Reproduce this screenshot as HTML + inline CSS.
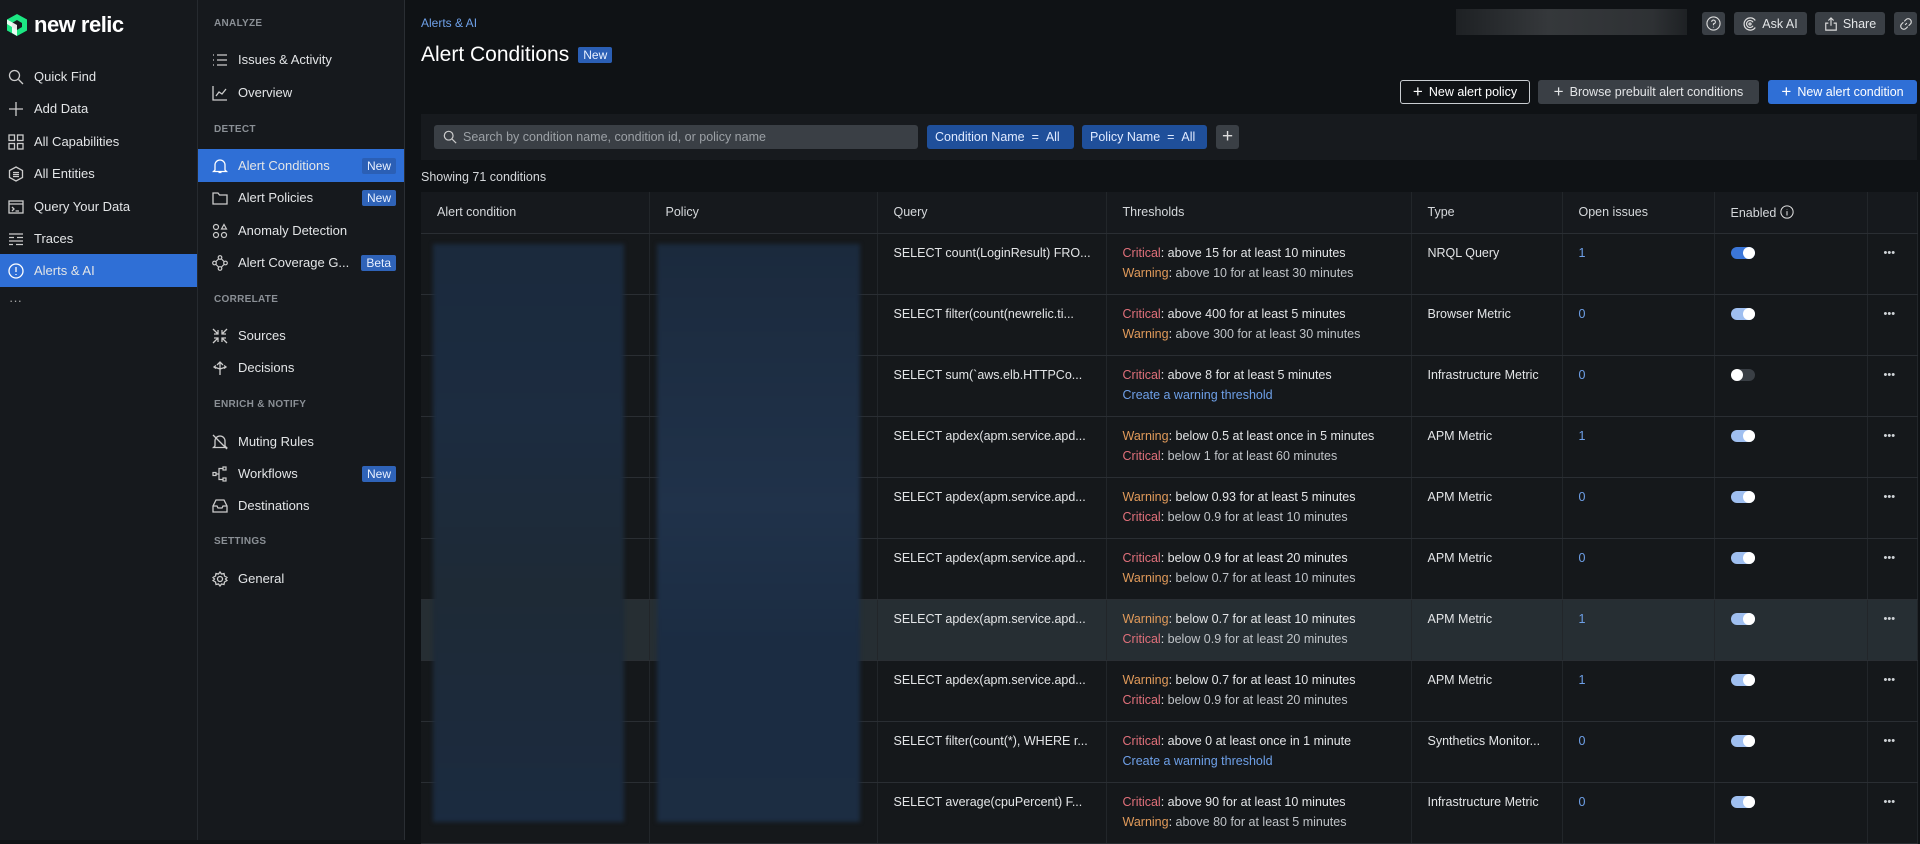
<!DOCTYPE html>
<html><head><meta charset="utf-8"><style>
*{box-sizing:border-box;margin:0;padding:0}
body{width:1920px;height:840px;overflow:hidden;background:#0f1215;font-family:"Liberation Sans",sans-serif;color:#e3e5e7;font-size:13px;position:relative}
.abs{position:absolute}
.nav1{left:0;top:0;width:198px;height:840px;background:#16191d;border-right:1px solid #262a2f}
.nav2{left:198px;top:0;width:207px;height:840px;background:#16191d;border-right:1px solid #2a2e33}
.it{position:absolute;left:0;height:33px;display:flex;align-items:center;font-size:13px;color:#e3e5e7;width:100%}
.it svg{width:16px;height:16px;margin-right:10px;flex:none}
.n1 .it{padding-left:8px}
.n2 .it{padding-left:14px}
.sec{position:absolute;left:16px;font-size:10px;color:#8b9096;letter-spacing:.3px;font-weight:bold}
.act{background:#2f6fd6}
.badge{position:absolute;right:8px;background:#2f63b8;color:#e8f0ff;font-size:12px;padding:1px 5px;border-radius:2px}
.btn{position:absolute;top:12px;height:23px;background:#3a3f45;border-radius:3px;display:flex;align-items:center;justify-content:center;font-size:12.5px;color:#e3e5e7;gap:5px}
.ab{position:absolute;top:80px;height:24px;border-radius:3px;display:flex;align-items:center;justify-content:center;font-size:12.5px;gap:6px}
table{position:absolute;left:421px;top:192px;border-collapse:collapse;table-layout:fixed;width:1496px}
td,th{border-bottom:1px solid #2a2e33;border-right:1px solid #22262a;vertical-align:top;text-align:left;font-weight:normal;padding:0 16px;background:#15181b;white-space:nowrap;overflow:hidden}
th{height:41px;vertical-align:middle;font-size:12.5px;color:#d5d8db;background:#16191d}
td{height:61px;padding-top:9px;font-size:12.5px;line-height:20px;color:#e3e5e7}
.c{color:#e0707a}.w{color:#e09a5a}.lk{color:#6ea0e8}
tr.h td{background:#262e33}
.tg{display:inline-block;width:24px;height:12px;border-radius:6px;background:#3b76d8;position:relative;margin-top:4px}
.tg:after{content:"";position:absolute;right:0;top:0;width:12px;height:12px;border-radius:50%;background:#fff}
.tg.off{background:#3a3f45}.tg.off:after{left:0;right:auto}
.tg.lt{background:#9fbff0}
.dots{color:#cfd3d7;font-size:11px;letter-spacing:0}
</style></head><body>

<div class="abs nav1 n1">
 <div class="abs" style="left:6px;top:12px;display:flex;align-items:center;gap:6px">
  <svg width="22" height="24" viewBox="0 0 22 24"><path d="M11 1L21 6.5V17.5L11 23L1 17.5V6.5Z" fill="#1ce783"/><path d="M11 7L16 10V14L11 17L6 14V10Z" fill="#16191d"/><path d="M1 6.5L11 12V23L6 20V14L1 11Z" fill="#fff" opacity=".9"/></svg>
  <span style="font-size:22px;font-weight:bold;color:#fff;letter-spacing:-.5px">new relic</span>
 </div>
 <div class="it" style="top:60px"><svg viewBox="0 0 16 16" fill="none" stroke="#ccc" stroke-width="1.3"><circle cx="6.5" cy="6.5" r="5"/><path d="M10.5 10.5L15 15"/></svg>Quick Find</div>
 <div class="it" style="top:92px"><svg viewBox="0 0 16 16" stroke="#ccc" stroke-width="1.3"><path d="M8 1V15M1 8H15"/></svg>Add Data</div>
 <div class="it" style="top:125px"><svg viewBox="0 0 16 16" fill="none" stroke="#ccc" stroke-width="1.3"><rect x="1" y="1" width="5.5" height="5.5"/><rect x="9.5" y="1" width="5.5" height="5.5"/><rect x="1" y="9.5" width="5.5" height="5.5"/><rect x="9.5" y="9.5" width="5.5" height="5.5"/></svg>All Capabilities</div>
 <div class="it" style="top:157px"><svg viewBox="0 0 16 16" fill="none" stroke="#ccc" stroke-width="1.3"><path d="M8 1L14.5 4.5V11.5L8 15L1.5 11.5V4.5Z"/><path d="M5 6.5H11M5 8.5H11M5 10.5H11"/></svg>All Entities</div>
 <div class="it" style="top:190px"><svg viewBox="0 0 16 16" fill="none" stroke="#ccc" stroke-width="1.3"><rect x="1" y="2" width="14" height="12"/><path d="M1 5H15M4 8L6 10L4 12M7.5 12H11"/></svg>Query Your Data</div>
 <div class="it" style="top:222px"><svg viewBox="0 0 16 16" stroke="#ccc" stroke-width="1.3"><path d="M1 3H15M1 6.5H6M9 6.5H15M1 10H15M1 13.5H5M8 13.5H15"/></svg>Traces</div>
 <div class="it act" style="top:254px"><svg viewBox="0 0 16 16" fill="none" stroke="#fff" stroke-width="1.3"><circle cx="8" cy="8" r="7"/><path d="M8 4V9M8 11V12"/></svg>Alerts &amp; AI</div>
 <div class="abs" style="left:9px;top:293px;color:#aaa">···</div>
</div>

<div class="abs nav2 n2">
 <div class="sec" style="top:18px">ANALYZE</div>
 <div class="it" style="top:43px"><svg viewBox="0 0 16 16" stroke="#ccc" stroke-width="1.3"><path d="M1 3H2M1 8H2M1 13H2M5 3H15M5 8H15M5 13H15"/></svg>Issues &amp; Activity</div>
 <div class="it" style="top:76px"><svg viewBox="0 0 16 16" fill="none" stroke="#ccc" stroke-width="1.3"><path d="M1 1V15H15M4 11L7 7L10 9L14 4"/></svg>Overview</div>
 <div class="sec" style="top:124px">DETECT</div>
 <div class="it act" style="top:149px"><svg viewBox="0 0 16 16" fill="none" stroke="#fff" stroke-width="1.3"><path d="M3 12V7A5 5 0 0 1 13 7V12L14.5 13.5H1.5Z M6.5 14.5H9.5"/></svg>Alert Conditions<span class="badge" style="background:#2b5fb5">New</span></div>
 <div class="it" style="top:181px"><svg viewBox="0 0 16 16" fill="none" stroke="#ccc" stroke-width="1.3"><path d="M1 3H6L7.5 5H15V14H1Z"/></svg>Alert Policies<span class="badge">New</span></div>
 <div class="it" style="top:214px"><svg viewBox="0 0 16 16" fill="none" stroke="#ccc" stroke-width="1.2"><circle cx="4" cy="4" r="2.5"/><path d="M12 1.5L14.5 6H9.5Z"/><circle cx="4" cy="12" r="2.5"/><circle cx="12" cy="12" r="2.5"/></svg>Anomaly Detection</div>
 <div class="it" style="top:246px"><svg viewBox="0 0 16 16" fill="none" stroke="#ccc" stroke-width="1.2"><circle cx="8" cy="2.5" r="1.8"/><circle cx="2.5" cy="8" r="1.8"/><circle cx="13.5" cy="8" r="1.8"/><circle cx="8" cy="13.5" r="1.8"/><path d="M4 6.5L6.5 4M9.5 4L12 6.5M12 9.5L9.5 12M6.5 12L4 9.5"/></svg>Alert Coverage G...<span class="badge">Beta</span></div>
 <div class="sec" style="top:294px">CORRELATE</div>
 <div class="it" style="top:319px"><svg viewBox="0 0 16 16" stroke="#ccc" stroke-width="1.3"><path d="M1 1L6 6M6 2V6H2M15 1L10 6M10 2V6H14M1 15L6 10M2 10H6V14M15 15L10 10M14 10H10V14"/></svg>Sources</div>
 <div class="it" style="top:351px"><svg viewBox="0 0 16 16" fill="none" stroke="#ccc" stroke-width="1.3"><path d="M8 15V2M5 5L8 2L11 5M8 9L2 7M8 9L14 7M4 5.5L2 7L4 8.5M12 5.5L14 7L12 8.5"/></svg>Decisions</div>
 <div class="sec" style="top:399px">ENRICH &amp; NOTIFY</div>
 <div class="it" style="top:425px"><svg viewBox="0 0 16 16" fill="none" stroke="#ccc" stroke-width="1.3"><path d="M3 12V7A5 5 0 0 1 13 7V12L14.5 13.5H1.5ZM1 1L15 15"/></svg>Muting Rules</div>
 <div class="it" style="top:457px"><svg viewBox="0 0 16 16" fill="none" stroke="#ccc" stroke-width="1.2"><rect x="1" y="6.5" width="3" height="3"/><rect x="11" y="1" width="3" height="3"/><rect x="11" y="12" width="3" height="3"/><path d="M4 8H7V2.5H11M7 8V13.5H11"/></svg>Workflows<span class="badge">New</span></div>
 <div class="it" style="top:489px"><svg viewBox="0 0 16 16" fill="none" stroke="#ccc" stroke-width="1.3"><path d="M1 8L4 2H12L15 8V14H1ZM1 8H5L6 10H10L11 8H15"/></svg>Destinations</div>
 <div class="sec" style="top:536px">SETTINGS</div>
 <div class="it" style="top:562px"><svg viewBox="0 0 16 16" fill="none" stroke="#ccc" stroke-width="1.3"><circle cx="8" cy="8" r="2.5"/><path d="M8 1L9.5 3L12 2.5L12.5 5L15 6.5L13.5 8L15 9.5L12.5 11L12 13.5L9.5 13L8 15L6.5 13L4 13.5L3.5 11L1 9.5L2.5 8L1 6.5L3.5 5L4 2.5L6.5 3Z"/></svg>General</div>
</div>

<div class="abs" style="left:421px;top:16px;font-size:12px;color:#6ea0e8">Alerts &amp; AI</div>
<div class="abs" style="left:421px;top:43px;font-size:21px;color:#fff;display:flex;align-items:center;gap:9px">Alert Conditions<span style="font-size:12px;background:#2b5fb5;color:#e8f0ff;padding:1px 5px;border-radius:2px">New</span></div>

<div class="abs" style="left:1456px;top:9px;width:231px;height:26px;background:linear-gradient(90deg,#1e2124,#35383b 40%,#2e3134 85%,#1e2124)"></div>
<div class="btn" style="left:1702px;width:23px"><svg width="15" height="15" viewBox="0 0 16 16" fill="none" stroke="#ddd" stroke-width="1.2"><circle cx="8" cy="8" r="7"/><path d="M6 6.2A2 2 0 1 1 8 8.3V9.8M8 11.5V12.3"/></svg></div>
<div class="btn" style="left:1734px;width:73px"><svg width="14" height="14" viewBox="0 0 16 16" fill="none" stroke="#ddd" stroke-width="1.4"><path d="M14 4A7 7 0 1 0 14 12M11.5 6A4 4 0 1 0 11.5 10"/><circle cx="8" cy="8" r="1.2"/></svg>Ask AI</div>
<div class="btn" style="left:1815px;width:70px"><svg width="14" height="14" viewBox="0 0 16 16" fill="none" stroke="#ddd" stroke-width="1.3"><path d="M8 1V10M5 4L8 1L11 4M5 7H2V15H14V7H11"/></svg>Share</div>
<div class="btn" style="left:1894px;width:23px"><svg width="14" height="14" viewBox="0 0 16 16" fill="none" stroke="#ddd" stroke-width="1.3"><path d="M7 9L9 7M6 5L8 3A2.8 2.8 0 0 1 13 8L11 10M10 11L8 13A2.8 2.8 0 0 1 3 8L5 6"/></svg></div>

<div class="ab" style="left:1400px;width:130px;border:1px solid #c9cdd1;color:#fff"><span style="font-size:17px;font-weight:300">+</span>New alert policy</div>
<div class="ab" style="left:1538px;width:221px;background:#3a3f45;color:#e3e5e7"><span style="font-size:17px;font-weight:300">+</span>Browse prebuilt alert conditions</div>
<div class="ab" style="left:1768px;width:149px;background:#2f6fd6;color:#fff"><span style="font-size:17px;font-weight:300">+</span>New alert condition</div>

<div class="abs" style="left:421px;top:114px;width:1496px;height:46px;background:#171a1e"></div>
<div class="abs" style="left:434px;top:125px;width:484px;height:24px;background:#3a3f45;border-radius:3px;display:flex;align-items:center;padding-left:9px;gap:6px;color:#9ca1a6;font-size:12.5px"><svg width="14" height="14" viewBox="0 0 16 16" fill="none" stroke="#ccc" stroke-width="1.4"><circle cx="6.5" cy="6.5" r="5"/><path d="M10.5 10.5L15 15"/></svg>Search by condition name, condition id, or policy name</div>
<div class="abs" style="left:927px;top:125px;width:147px;height:24px;background:#1f4f9a;border-radius:3px;color:#e0eaff;font-size:12.5px;display:flex;align-items:center;padding-left:8px">Condition Name&nbsp;&nbsp;=&nbsp;&nbsp;All</div>
<div class="abs" style="left:1082px;top:125px;width:125px;height:24px;background:#1f4f9a;border-radius:3px;color:#e0eaff;font-size:12.5px;display:flex;align-items:center;padding-left:8px">Policy Name&nbsp;&nbsp;=&nbsp;&nbsp;All</div>
<div class="abs" style="left:1216px;top:125px;width:23px;height:24px;background:#3a3f45;border-radius:3px;color:#ddd;font-size:19px;display:flex;align-items:center;justify-content:center;font-weight:300">+</div>
<div class="abs" style="left:421px;top:170px;font-size:12.5px;color:#d5d8db">Showing 71 conditions</div>

<table>
<colgroup><col style="width:228px"><col style="width:228px"><col style="width:229px"><col style="width:305px"><col style="width:151px"><col style="width:152px"><col style="width:153px"><col style="width:50px"></colgroup>
<tr><th>Alert condition</th><th>Policy</th><th>Query</th><th>Thresholds</th><th>Type</th><th>Open issues</th><th>Enabled <svg width="14" height="14" viewBox="0 0 16 16" fill="none" stroke="#ddd" stroke-width="1.2" style="vertical-align:-2px"><circle cx="8" cy="8" r="7"/><path d="M8 7V12M8 4.5V5"/></svg></th><th></th></tr>
<tr><td></td><td></td><td>SELECT count(LoginResult) FRO...</td><td><span class="c">Critical</span>: above 15 for at least 10 minutes<br><span class="w">Warning</span>: <span style="color:#bfc3c7">above 10 for at least 30 minutes</span></td><td>NRQL Query</td><td class="lk">1</td><td><span class="tg"></span></td><td class="dots">•••</td></tr>
<tr><td></td><td></td><td>SELECT filter(count(newrelic.ti...</td><td><span class="c">Critical</span>: above 400 for at least 5 minutes<br><span class="w">Warning</span>: <span style="color:#bfc3c7">above 300 for at least 30 minutes</span></td><td>Browser Metric</td><td class="lk">0</td><td><span class="tg lt"></span></td><td class="dots">•••</td></tr>
<tr><td></td><td></td><td>SELECT sum(`aws.elb.HTTPCo...</td><td><span class="c">Critical</span>: above 8 for at least 5 minutes<br><span class="lk">Create a warning threshold</span></td><td>Infrastructure Metric</td><td class="lk">0</td><td><span class="tg off"></span></td><td class="dots">•••</td></tr>
<tr><td></td><td></td><td>SELECT apdex(apm.service.apd...</td><td><span class="w">Warning</span>: below 0.5 at least once in 5 minutes<br><span class="c">Critical</span>: <span style="color:#bfc3c7">below 1 for at least 60 minutes</span></td><td>APM Metric</td><td class="lk">1</td><td><span class="tg lt"></span></td><td class="dots">•••</td></tr>
<tr><td></td><td></td><td>SELECT apdex(apm.service.apd...</td><td><span class="w">Warning</span>: below 0.93 for at least 5 minutes<br><span class="c">Critical</span>: <span style="color:#bfc3c7">below 0.9 for at least 10 minutes</span></td><td>APM Metric</td><td class="lk">0</td><td><span class="tg lt"></span></td><td class="dots">•••</td></tr>
<tr><td></td><td></td><td>SELECT apdex(apm.service.apd...</td><td><span class="c">Critical</span>: below 0.9 for at least 20 minutes<br><span class="w">Warning</span>: <span style="color:#bfc3c7">below 0.7 for at least 10 minutes</span></td><td>APM Metric</td><td class="lk">0</td><td><span class="tg lt"></span></td><td class="dots">•••</td></tr>
<tr class="h"><td></td><td></td><td>SELECT apdex(apm.service.apd...</td><td><span class="w">Warning</span>: below 0.7 for at least 10 minutes<br><span class="c">Critical</span>: <span style="color:#bfc3c7">below 0.9 for at least 20 minutes</span></td><td>APM Metric</td><td class="lk">1</td><td><span class="tg lt"></span></td><td class="dots">•••</td></tr>
<tr><td></td><td></td><td>SELECT apdex(apm.service.apd...</td><td><span class="w">Warning</span>: below 0.7 for at least 10 minutes<br><span class="c">Critical</span>: <span style="color:#bfc3c7">below 0.9 for at least 20 minutes</span></td><td>APM Metric</td><td class="lk">1</td><td><span class="tg lt"></span></td><td class="dots">•••</td></tr>
<tr><td></td><td></td><td>SELECT filter(count(*), WHERE r...</td><td><span class="c">Critical</span>: above 0 at least once in 1 minute<br><span class="lk">Create a warning threshold</span></td><td>Synthetics Monitor...</td><td class="lk">0</td><td><span class="tg lt"></span></td><td class="dots">•••</td></tr>
<tr><td></td><td></td><td>SELECT average(cpuPercent) F...</td><td><span class="c">Critical</span>: above 90 for at least 10 minutes<br><span class="w">Warning</span>: <span style="color:#bfc3c7">above 80 for at least 5 minutes</span></td><td>Infrastructure Metric</td><td class="lk">0</td><td><span class="tg lt"></span></td><td class="dots">•••</td></tr>
</table>

<div class="abs" style="left:433px;top:244px;width:191px;height:578px;background:linear-gradient(180deg,#1b2a3d,#1c2c40 30%,#1e2a36 60%,#1b2b40);filter:blur(2px)"></div>
<div class="abs" style="left:657px;top:244px;width:203px;height:578px;background:linear-gradient(180deg,#1b2a3d,#20324a 45%,#1b2c42 70%,#1c2d42);filter:blur(2px)"></div>
</body></html>
